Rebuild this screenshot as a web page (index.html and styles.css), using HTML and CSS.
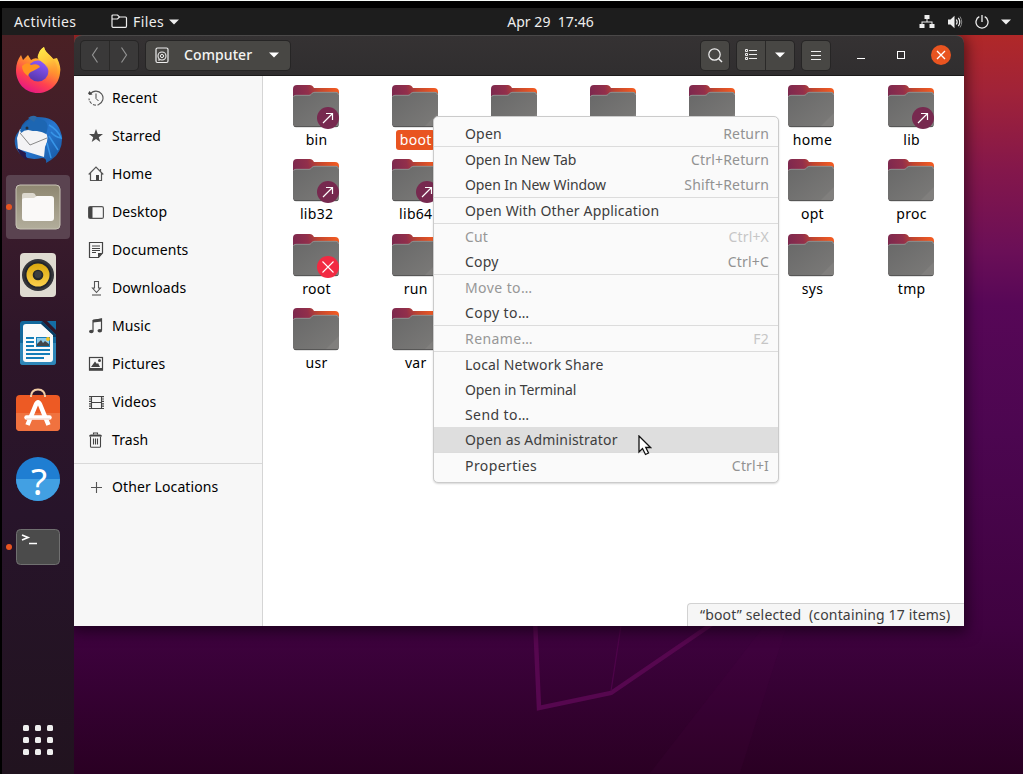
FILE: index.html
```html
<!DOCTYPE html>
<html lang="en">
<head>
<meta charset="utf-8">
<title>Computer</title>
<link rel="stylesheet" href="styles.css">
</head>
<body>
<svg class="defs" width="0" height="0">
  <defs>
    <linearGradient id="gBack" x1="0" y1="0.6" x2="1" y2="0.4"><stop offset="0" stop-color="#77274f"/><stop offset="0.4" stop-color="#922f4b"/><stop offset="0.62" stop-color="#c0452f"/><stop offset="1" stop-color="#f05a22"/></linearGradient>
    <linearGradient id="gFront" x1="0" y1="0" x2="1" y2="1"><stop offset="0" stop-color="#686868"/><stop offset="1" stop-color="#7c7b79"/></linearGradient>
    <linearGradient id="gFox" x1="0.8" y1="0" x2="0.3" y2="1"><stop offset="0" stop-color="#fff44f"/><stop offset="0.4" stop-color="#ff9a2b"/><stop offset="0.72" stop-color="#ff4050"/><stop offset="1" stop-color="#e31587"/></linearGradient>
    <linearGradient id="gTail" x1="0" y1="0" x2="0.3" y2="1"><stop offset="0" stop-color="#fff04a"/><stop offset="0.5" stop-color="#ffc63a"/><stop offset="1" stop-color="#ff7139" stop-opacity="0"/></linearGradient>
    <linearGradient id="gGlobe" x1="0.7" y1="0" x2="0.3" y2="1"><stop offset="0" stop-color="#9059ff"/><stop offset="1" stop-color="#5436a8"/></linearGradient>
    <linearGradient id="gBird" x1="0" y1="0" x2="1" y2="1"><stop offset="0" stop-color="#144f91"/><stop offset="0.5" stop-color="#2877cf"/><stop offset="1" stop-color="#15559f"/></linearGradient>
    <linearGradient id="gFiles" x1="0" y1="0" x2="0" y2="1"><stop offset="0" stop-color="#8e8771"/><stop offset="1" stop-color="#b2ad9b"/></linearGradient>
    <linearGradient id="gYellow" x1="0" y1="0" x2="0" y2="1"><stop offset="0" stop-color="#d9a70d"/><stop offset="1" stop-color="#fbd14b"/></linearGradient>
    <symbol id="folder" viewBox="0 0 46 44">
      <path d="M0 40V4Q0 0 4 0H17Q19 0 20 1.5L21 3H42Q46 3 46 7V39Z" fill="url(#gBack)"/>
      <path d="M0 13Q0 10 3 10H16C19 10 18 7 22 7H43Q46 7 46 10V39Q46 42 43 42H3Q0 42 0 39Z" fill="url(#gFront)"/>
      <path d="M.5 12Q.5 10.3 3 10.3H16C19 10.3 18 7.3 22 7.3H43Q45.5 7.3 45.5 10" fill="none" stroke="#999" stroke-width=".8"/>
      <path d="M46 28V39Q46 42 43 42H32Z" fill="#868583" opacity=".55"/>
      <path d="M1 41Q1.500 41.700 3 41.700H43Q44.500 41.700 45 41" fill="none" stroke="#4c4c4c" stroke-width=".9"/>
    </symbol>
    <symbol id="link" viewBox="0 0 22 22"><circle cx="11" cy="11" r="11" fill="#77294f"/><path d="M6 16L15.500 6.500M9 6.500H15.500V13" fill="none" stroke="#fff" stroke-width="1.200"/></symbol>
    <symbol id="deny" viewBox="0 0 22 22"><circle cx="11" cy="11" r="11" fill="#f22a42"/><path d="M5.500 5.500L16.500 16.500M16.500 5.500L5.500 16.500" stroke="#fff" stroke-width="1.100"/></symbol>
  </defs>
</svg>
<div class="screen">
  <header class="topbar">
    <span class="activities">Activities</span>
    <span class="appmenu">
      <svg width="17" height="15" viewBox="0 0 17 15"><path d="M1 12V2Q1 1 2 1H6.500L8.500 3H14.500Q15.500 3 15.500 4V12Q15.500 13.300 14.500 13.300H2Q1 13.300 1 12ZM1 5H6.500L8.500 3" fill="none" stroke="#eee" stroke-width="1.200"/></svg>
      <span class="appname">Files</span>
      <svg width="10" height="6"><path d="M0 .5H10L5 5.500Z" fill="#eee"/></svg>
    </span>
    <span class="clock">Apr 29&nbsp; 17:46</span>
    <span class="tray">
      <svg width="16" height="14"><path d="M5.500 0H10.500V4H8.500V6.500H13.500V9H15.500V13H10.500V9H12.500V7.500H3.500V9H5.500V13H.5V9H2.500V6.500H7.500V4H5.500Z" fill="#eee"/></svg>
      <svg width="16" height="14"><path d="M1 4.500H3.500L7.500 .8V13.200L3.500 9.500H1Z" fill="#eee"/><path d="M9.300 4.500Q11 7 9.300 9.500M11.300 2.800Q14.300 7 11.300 11.200" fill="none" stroke="#eee" stroke-width="1.200"/><path d="M13 1.500Q16.500 7 13 12.500" fill="none" stroke="#888"/></svg>
      <svg width="14" height="14"><path d="M4.300 1.700A6 6 0 1 0 9.700 1.700M7 0V7" fill="none" stroke="#eee" stroke-width="1.300"/></svg>
      <svg width="10" height="6"><path d="M0 .5H10L5 5.500Z" fill="#eee"/></svg>
    </span>
  </header>
  <div class="desktop">
    <svg class="wall" width="1021" height="738" viewBox="2 36 1021 738">
      <path d="M535 620L539 709L611 694L712 625" fill="none" stroke="#56074f" stroke-width="4.500"/>
      <path d="M611 692L622 620" stroke="#4d0449" stroke-width="1.300"/>
      <path d="M765 626H787L740 774H650Z" fill="#560a50" opacity=".1"/>
    </svg>
    <nav class="dock">
      <span class="app"><svg width="46" height="49" viewBox="0 0 46 49">
        <path d="M1 23C1 17 3 12 6 8L8 13L13 8L16 13Q20 10 24 12C23 6 25 3 29 0C30 6 35 8 38 12L42 11C45 17 46 22 45 26C44 38 34 46 23 46C10 46 1 36 1 23Z" fill="url(#gFox)"/>
        <circle cx="23" cy="24" r="10.500" fill="url(#gGlobe)"/>
        <path d="M7 19Q12 14 16 18Q23 16 25 20Q22 22 18 24Q14 25 13 29Q7 25 7 19Z" fill="#ff9320"/>
        <path d="M29 0C30 7 40 9 42 20C44 30 36 38 28 37C34 33 36 25 31 19C28 14 21 13 23 8Q25 2 29 0Z" fill="url(#gTail)"/>
      </svg></span>
      <span class="app"><svg width="50" height="49" viewBox="0 0 50 49">
        <path d="M7 15Q10 4 22 2Q42 1 47 15L49 21Q50 37 38 45L33 48Q34 43 29 43Q10 47 3 33Q-1 22 7 15Z" fill="url(#gBird)"/>
        <path d="M7 14L32 17Q37 22 32 32L31 42Q18 38 5 34L4 23Z" fill="#f3f3f5"/>
        <path d="M7 18L17 30L34 23" fill="none" stroke="#888" stroke-width="1"/>
        <path d="M4 33Q8 43 15 45Q12 41 13 38Z" fill="#26194d"/>
        <path d="M7 15Q15 1 27 4Q38 6 33 19Q25 15 20 16Q13 13 8 18Z" fill="#1d66b2"/>
        <path d="M15 3Q20-1 24 2L21 7Z" fill="#2c69a6"/>
        <path d="M36 10Q45 15 48 23Q42 22 38 17M36 21Q41 29 45 35M34 28L38 43" fill="none" stroke="#3795e7" stroke-width="1.500"/>
        <circle cx="14" cy="13" r="1.500" fill="#28303c"/>
      </svg></span>
      <span class="app active running"><svg width="46" height="46">
        <rect x="1" y="1" width="44" height="44" rx="4" fill="url(#gFiles)" stroke="#c7c3b5"/>
        <path d="M7 18V11Q7 9 9 9H18Q20 9 21 12H28V18Z" fill="#dcd8ce"/>
        <path d="M7 16Q7 14 10 14H19L22 12H36Q39 12 39 15V34Q39 37 36 37H10Q7 37 7 34Z" fill="#faf9f8"/>
      </svg></span>
      <span class="app"><svg width="46" height="46">
        <rect x="5" y="1" width="36" height="44" rx="4" fill="#dfdbd1"/><circle cx="23" cy="23" r="16" fill="#35363a"/><circle cx="23" cy="23" r="13.500" fill="#22262d"/><circle cx="23" cy="23" r="11.500" fill="url(#gYellow)"/><circle cx="23" cy="23" r="5.300" fill="#24282c"/><circle cx="23" cy="22.500" r="3.500" fill="#3c3e40"/>
      </svg></span>
      <span class="app"><svg width="46" height="46">
        <path d="M5 4Q5 1 8 1H27L41 15V42Q41 45 38 45H8Q5 45 5 42Z" fill="#13689c"/><path d="M5 23H41V42Q41 45 38 45H8Q5 45 5 42Z" fill="#2e86b8"/>
        <path d="M8 7Q8 4 11 4H27L38 15V39Q38 42 35 42H11Q8 42 8 39Z" fill="#fafafa"/><path d="M27 1L41 15V17H38V15L26 4Z" fill="#083d65"/><path d="M32 1H41V10Z" fill="#146da5"/>
        <path d="M11 18H19M11 22H19M11 26H19M11 30H35M11 34H35M11 38H29" stroke="#147db8" stroke-width="2"/>
        <rect x="21" y="17" width="14" height="10" fill="#147db8"/><rect x="22" y="18" width="12" height="8" fill="#8cc9e8"/><circle cx="33" cy="19" r="2" fill="#f5c21a"/><path d="M22 26V24L26 20L28 23L30 21L34 24V26Z" fill="#434649"/>
      </svg></span>
      <span class="app"><svg width="46" height="46">
        <path d="M16 9Q16 1.500 23 1.500T30 9" fill="none" stroke="#f3cda4" stroke-width="2"/><rect x="1" y="7" width="44" height="36" rx="4" fill="#ed5a24"/><path d="M1 25H45V39Q45 43 41 43H5Q1 43 1 39Z" fill="#f0723f"/><path d="M16 9V7M30 9V7" stroke="#f3cda4" stroke-width="2" fill="none"/>
        <path d="M12.500 37L21 16.500Q23 12 25 16.500L33.500 37" fill="none" stroke="#fff" stroke-width="4.500"/><path d="M11.500 29.500H34.500" stroke="#fff" stroke-width="4.500" stroke-linecap="round"/><path d="M11 31H35" stroke="#f3cabb" stroke-width="1"/>
      </svg></span>
      <span class="app"><svg width="46" height="46"><circle cx="23" cy="23" r="22" fill="#1f7ed2"/><path d="M1 23A22 22 0 0 0 45 23Z" fill="#42a0e3"/><text class="help" x="24" y="38.500" text-anchor="middle">?</text></svg></span>
      <span class="app running"><svg width="46" height="46"><rect x="1.500" y="5.500" width="43" height="35" rx="4" fill="#4b4b4b" stroke="#707070"/><path d="M7 11L13 13.500L7 16" fill="none" stroke="#fff" stroke-width="1.700"/><path d="M14 19.500H22" stroke="#fff" stroke-width="1.500"/></svg></span>
      <span class="grid-button"><i></i><i></i><i></i><i></i><i></i><i></i><i></i><i></i><i></i></span>
    </nav>
    <main class="window">
      <div class="titlebar">
        <div class="group nav"><span class="btn"><svg width="10" height="18"><path d="M7.500 1.500L2.500 9L7.500 16.500" fill="none" stroke="#929292" stroke-width="1.200"/></svg></span><span class="btn"><svg width="10" height="18"><path d="M2.500 1.500L7.500 9L2.500 16.500" fill="none" stroke="#929292" stroke-width="1.200"/></svg></span></div>
        <div class="group path"><svg width="14" height="17"><rect x="1" y="1" width="12" height="14.500" rx="1.500" fill="none" stroke="#eee" stroke-width="1.200"/><circle cx="7" cy="9" r="4" fill="none" stroke="#eee" stroke-width="1.100"/><circle cx="7" cy="9" r="1.600" fill="none" stroke="#eee"/><path d="M3 13H5" stroke="#eee"/></svg><span>Computer</span><svg width="10" height="6"><path d="M0 .5H10L5 5.500Z" fill="#fff"/></svg></div>
        <div class="group search"><span class="btn"><svg width="16" height="16"><circle cx="7.500" cy="7.500" r="5.700" fill="none" stroke="#eee" stroke-width="1.200"/><path d="M11.500 11.500L15 15" stroke="#eee" stroke-width="1.500"/></svg></span></div>
        <div class="group view"><span class="btn"><svg width="14" height="12"><path d="M1.500 .5h2v2h-2zM1.500 4.500h2v2h-2zM1.500 8.500h2v2h-2z" fill="none" stroke="#eee"/><path d="M5 1.500H13M5 5.500H13M5 9.500H13" stroke="#eee"/></svg></span><span class="btn"><svg width="10" height="6"><path d="M0 .5H10L5 5.500Z" fill="#fff"/></svg></span></div>
        <div class="group"><span class="btn"><svg width="12" height="11"><path d="M1 1.500H11M1 5.500H11M1 9.500H11" stroke="#eee"/></svg></span></div>
        <div class="controls"><svg width="8" height="9"><path d="M0 7.500H8" stroke="#fff"/></svg><svg width="8" height="8"><rect x=".5" y=".5" width="7" height="7" fill="none" stroke="#fff"/></svg><svg width="20" height="20"><circle cx="10" cy="10" r="10" fill="#e95420"/><path d="M6 6L14 14M14 6L6 14" stroke="#fff" stroke-width="1.300"/></svg></div>
      </div>
      <div class="content">
        <aside class="sidebar">
          <div class="place"><svg width="16" height="16"><path d="M2.300 4A7 7 0 1 1 1 8.500" fill="none" stroke="#555" stroke-width="1.100" stroke-dasharray="27 1.500 3 1.500 3 1"/><path d="M0 3.500L1.500 1L4.500 4.500L1.500 5Z" fill="#444"/><path d="M8 3.500V8.500L10.500 11" fill="none" stroke="#444"/></svg>Recent</div>
          <div class="place"><svg width="16" height="16"><path d="M8 1L9.800 6H15L10.800 9.200L12.300 14L8 11.100L3.700 14L5.200 9.200L1 6H6.200Z" fill="#4a4a4a"/></svg>Starred</div>
          <div class="place"><svg width="16" height="16"><path d="M.7 8.500L8 1.200L15.300 8.500M2.500 7V14.500H13.500V7M12.500 3V5.500" fill="none" stroke="#555" stroke-width="1.200"/><path d="M8 9h3v5.500h-3z" fill="#444"/></svg>Home</div>
          <div class="place"><svg width="16" height="16"><rect x=".6" y="2.600" width="14.800" height="11.800" rx="1.500" fill="none" stroke="#555" stroke-width="1.200"/><path d="M1 3h3.500v11H1z" fill="#444"/></svg>Desktop</div>
          <div class="place"><svg width="16" height="16"><path d="M1.500 .5H14.500V11L10.500 15.500H1.500Z" fill="none" stroke="#444" stroke-width="1.200"/><path d="M10 11H14.500L10 15.500Z" fill="#444"/><path d="M4 4H12M4 6.500H12M4 8.500H12M4 10.500H8" stroke="#444"/></svg>Documents</div>
          <div class="place"><svg width="16" height="16"><path d="M6.500 1.500H10.500V8H12.500L8.500 12.500L4.500 8H6.500Z" fill="none" stroke="#555" stroke-width="1.100"/><path d="M4 15H13" stroke="#444"/></svg>Downloads</div>
          <div class="place"><svg width="16" height="16"><path d="M5 13V2.500L13.500 1V12" fill="none" stroke="#444" stroke-width="1.200"/><path d="M5 1.800L14 .5V3.500L5 4.500Z" fill="#444"/><ellipse cx="3.300" cy="13.500" rx="2.300" ry="1.700" fill="#444"/><ellipse cx="11.800" cy="12.800" rx="2.300" ry="1.700" fill="#444"/></svg>Music</div>
          <div class="place"><svg width="16" height="16"><rect x="1.500" y="1.500" width="13" height="12.500" fill="none" stroke="#444" stroke-width="1.200"/><path d="M1 12h14v2.500H1zM3 11L7 5.500L9 8L10 7L12 11Z" fill="#444"/><circle cx="11.500" cy="4.500" r="1.500" fill="#444"/></svg>Pictures</div>
          <div class="place"><svg width="16" height="16"><path d="M3.500 2.500H13.500V14.500H3.500ZM3.500 8.500H13.500" fill="none" stroke="#444" stroke-width="1.100"/><path d="M2 2V15M15 2V15" stroke="#444" stroke-width="2" stroke-dasharray="1.200 1.200"/></svg>Videos</div>
          <div class="place"><svg width="16" height="16"><path d="M1 4.500Q1 2.500 3 2.500H12Q14 2.500 14 4.500Z" fill="#444"/><path d="M5.500 2.500V1H9.500V2.500M2.500 4.500V14.500Q2.500 15.300 3.500 15.300H11.500Q12.500 15.300 12.500 14.500V4.500M5.500 6.500V12.500M7.500 6.500V12.500M9.500 6.500V12.500" fill="none" stroke="#444" stroke-width="1.100"/></svg>Trash</div>
          <div class="rule"></div>
          <div class="place"><svg width="16" height="16"><path d="M3 8.500H14M8.500 3V14" stroke="#555" stroke-width="1.100"/></svg>Other Locations</div>
        </aside>
        <section class="files">
          <div class="file"><svg class="icon"><use href="#folder"/></svg><svg class="emblem"><use href="#link"/></svg><b>bin</b></div>
          <div class="file selected"><svg class="icon"><use href="#folder"/></svg><b>boot</b></div>
          <div class="file"><svg class="icon"><use href="#folder"/></svg></div>
          <div class="file"><svg class="icon"><use href="#folder"/></svg></div>
          <div class="file"><svg class="icon"><use href="#folder"/></svg></div>
          <div class="file"><svg class="icon"><use href="#folder"/></svg><b>home</b></div>
          <div class="file"><svg class="icon"><use href="#folder"/></svg><svg class="emblem"><use href="#link"/></svg><b>lib</b></div>
          <div class="file"><svg class="icon"><use href="#folder"/></svg><svg class="emblem"><use href="#link"/></svg><b>lib32</b></div>
          <div class="file"><svg class="icon"><use href="#folder"/></svg><svg class="emblem"><use href="#link"/></svg><b>lib64</b></div>
          <div class="file sixth"><svg class="icon"><use href="#folder"/></svg><b>opt</b></div>
          <div class="file"><svg class="icon"><use href="#folder"/></svg><b>proc</b></div>
          <div class="file"><svg class="icon"><use href="#folder"/></svg><svg class="emblem"><use href="#deny"/></svg><b>root</b></div>
          <div class="file"><svg class="icon"><use href="#folder"/></svg><b>run</b></div>
          <div class="file sixth"><svg class="icon"><use href="#folder"/></svg><b>sys</b></div>
          <div class="file"><svg class="icon"><use href="#folder"/></svg><b>tmp</b></div>
          <div class="file"><svg class="icon"><use href="#folder"/></svg><b>usr</b></div>
          <div class="file"><svg class="icon"><use href="#folder"/></svg><b>var</b></div>
        </section>
        <div class="status">“boot” selected&nbsp; (containing 17 items)</div>
      </div>
    </main>
  </div>
  <div class="menu">
    <div class="item"><span>Open</span><kbd>Return</kbd></div>
    <hr>
    <div class="item"><span class="tight">Open In New Tab</span><kbd>Ctrl+Return</kbd></div>
    <div class="item"><span class="tight">Open In New Window</span><kbd>Shift+Return</kbd></div>
    <hr>
    <div class="item"><span>Open With Other Application</span></div>
    <hr>
    <div class="item disabled"><span>Cut</span><kbd>Ctrl+X</kbd></div>
    <div class="item"><span>Copy</span><kbd>Ctrl+C</kbd></div>
    <hr>
    <div class="item disabled"><span class="wide">Move to…</span></div>
    <div class="item"><span class="wide">Copy to…</span></div>
    <hr>
    <div class="item disabled"><span class="wide">Rename…</span><kbd>F2</kbd></div>
    <hr>
    <div class="item"><span>Local Network Share</span></div>
    <div class="item"><span class="tight">Open in Terminal</span></div>
    <div class="item"><span class="wide">Send to…</span></div>
    <div class="item hover"><span>Open as Administrator</span></div>
    <hr>
    <div class="item"><span class="wide">Properties</span><kbd>Ctrl+I</kbd></div>
  </div>
  <svg class="cursor" width="14" height="21"><path d="M1 1V17L4.500 13.500L7.500 19.500L10.500 18L7.800 12.500H12.500Z" fill="#fff" stroke="#111" stroke-width="1.300"/></svg>
</div>
</body>
</html>
```

FILE: styles.css
```css
* { box-sizing: border-box; }
body { margin: 0; background: #000; font: 14px "Noto Sans", sans-serif; overflow: hidden; }
svg { display: block; flex: none; }
.defs, .wall, .menu, .cursor, .emblem { position: absolute; }
.screen {
  position: relative; width: 1023px; height: 774px;
  border-top: 1px solid #f4f8f6; padding: 7px 0 0 2px; background: #000;
  display: flex; flex-direction: column;
}
.topbar {
  height: 27px; flex: none; background: #1d1d1d; color: #eee;
  display: grid; grid-template-columns: 109px 1fr auto 1fr; align-items: center;
  padding: 0 12px 0 12px;
}
.activities { letter-spacing: .4px; }
.appmenu { display: flex; align-items: center; gap: 5px; margin-left: -12px; }
.appname { letter-spacing: .4px; }
.clock { margin-left: -33px; letter-spacing: .05px; }
.activities, .appname, .clock { padding-bottom: 1px; }
.tray { display: flex; align-items: center; justify-content: flex-end; gap: 12px; }
.desktop {
  flex: 1; position: relative; display: flex; align-items: flex-start;
  background: linear-gradient(#b02828 0, #a12338 55px, #84174b 135px, #6b0f57 215px, #570757 270px, #4c0650 400px, #3f0240 590px, #2a0023 738px);
}
.wall { left: 0; top: 0; }
.dock {
  position: relative; width: 72px; height: 739px; display: flex; flex-direction: column;
  align-items: center; gap: 4px; padding-top: 4px;
  background: linear-gradient(#4a2024, #3d1d2c 150px, #2e1629 300px, #27142a 480px, #21131f);
}
.app { position: relative; width: 64px; height: 64px; border-radius: 4px; display: grid; place-items: center; flex: none; }
.app.active { background: #5a4350; }
.app.running::before {
  content: ""; position: absolute; left: 0; top: 29px; width: 6px; height: 6px;
  border-radius: 50%; background: #e95420;
}
.help { font: 37px "Noto Sans", sans-serif; fill: #fff; }
.grid-button { margin-top: auto; margin-bottom: 19px; display: grid; grid-template-columns: repeat(3, 6px); gap: 6px; }
.grid-button i { width: 6px; height: 6px; border-radius: 1.5px; background: #eee; }
.window {
  position: relative; width: 890px; height: 591px; border-radius: 8px 8px 0 0;
  box-shadow: 0 3px 14px 3px rgba(0, 0, 0, .5); clip-path: inset(0 -30px -30px 0);
  display: flex; flex-direction: column;
}
.titlebar {
  height: 41px; flex: none; display: flex; align-items: center; padding: 0 13px 1px 7px;
  background: linear-gradient(#353233, #302e2f); border-radius: 8px 8px 0 0;
  border-top: 1px solid #4a4848; border-bottom: 1px solid #1b1a1a; color: #f4f4f2;
}
.group { height: 29px; display: flex; border-radius: 4px; background: #484744; box-shadow: 0 0 0 1px #262525; margin-right: 8px; }
.btn { width: 28px; display: grid; place-items: center; }
.btn + .btn { width: 29px; border-left: 1px solid #2a2928; }
.nav { background: #3a3939; }
.path { width: 144px; align-items: center; padding: 0 11px 0 9px; margin-right: auto; font-weight: 500; }
.path span { margin: 0 auto 0 15px; padding-bottom: 2px; letter-spacing: .1px; }
.controls { display: flex; align-items: center; gap: 32px; margin-left: 19px; }
.controls svg:last-child { margin-left: -6px; }
.content { flex: 1; position: relative; display: flex; background: #fff; color: #000; }
.sidebar { width: 189px; border-right: 1px solid #d5d5d5; background: #f7f7f7; padding-top: 3px; }
.place { height: 38px; display: flex; align-items: center; padding: 0 0 2px 14px; gap: 8px; letter-spacing: .1px; }
.place svg { margin-top: 2px; }
.rule { height: 1px; background: #d9d9d9; margin: 4px 0; }
.files {
  flex: 1; display: grid; grid-template-columns: repeat(7, 1fr); grid-auto-rows: 74.4px;
  align-content: start; padding: 9px 3.8px 9px 3px;
}
.file { position: relative; display: flex; flex-direction: column; align-items: center; gap: 1px; }
.icon { width: 46px; height: 44px; }
.emblem { width: 22px; height: 22px; left: calc(50% + 1px); top: 22px; }
.file b { font-weight: 400; height: 20px; line-height: 19px; padding: 0 3px 0 4px; border-radius: 3px; letter-spacing: .3px; margin-left: 1px; }
.selected b { background: #e95420; color: #fff; }
.sixth { grid-column: 6; }
.status {
  position: absolute; right: 0; bottom: 0; width: 277px; height: 23px; padding-left: 12px;
  border: solid #d2d2d2; border-width: 1px 0 0 1px; border-radius: 4px 0 0 0;
  background: #f6f6f6; color: #3d3d3d; line-height: 22px; white-space: nowrap; letter-spacing: .16px;
}
.menu {
  left: 433px; top: 115px; width: 346px; height: 367px; padding: 4px 0;
  border: 1px solid #cbcbcb; border-radius: 5px; background: #fafafa; color: #3d3d3d;
  box-shadow: 0 1px 2px rgba(0, 0, 0, .16);
}
.item { height: 25px; display: flex; justify-content: space-between; align-items: center; padding: 0 9px 0 31px; letter-spacing: .18px; }
.item kbd { font: inherit; color: #929292; }
.tight { letter-spacing: -.1px; }
.wide { letter-spacing: .42px; }
.item.disabled { color: #979797; }
.disabled kbd { color: #c6c6c6; }
.hover { background: #dedede; }
.menu hr { height: 1px; margin: 0; border: 0; background: #dcdcdc; }
.cursor { left: 638px; top: 434px; }
```
